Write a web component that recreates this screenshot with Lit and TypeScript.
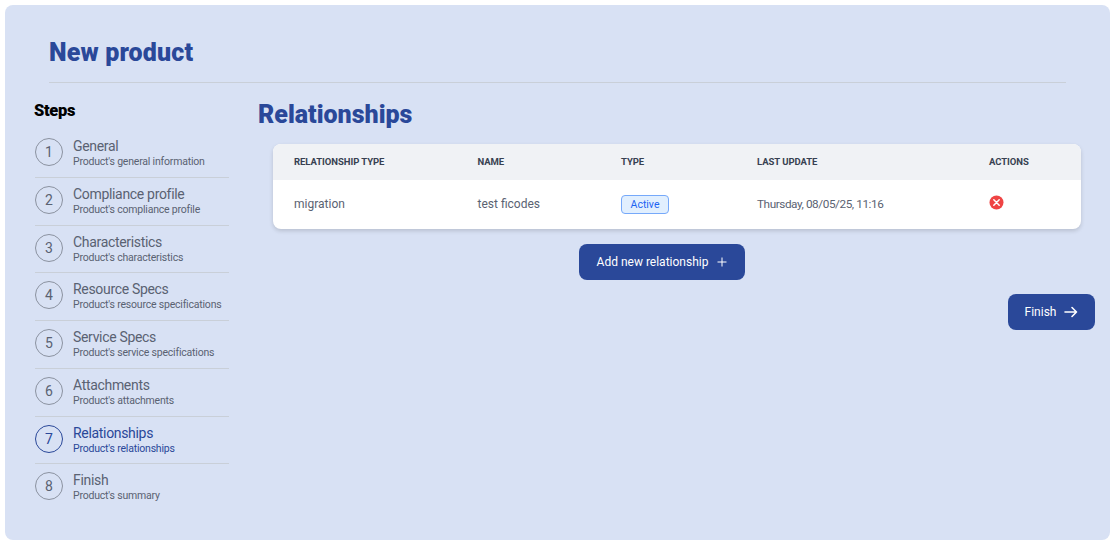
import { LitElement, html, css } from "lit";
import { customElement } from "lit/decorators.js";

const STEPS: [string, string][] = [
  ["General", "Product's general information"],
  ["Compliance profile", "Product's compliance profile"],
  ["Characteristics", "Product's characteristics"],
  ["Resource Specs", "Product's resource specifications"],
  ["Service Specs", "Product's service specifications"],
  ["Attachments", "Product's attachments"],
  ["Relationships", "Product's relationships"],
  ["Finish", "Product's summary"],
];

@customElement("app-root")
export class AppRoot extends LitElement {
  static styles = css`
    :host { display: block; width: 1120px; height: 549px; background: #fff; font-family: Roboto, "Noto Sans", sans-serif; overflow: hidden; }
    .page { box-sizing: border-box; margin: 5px 0 0 5px; width: 1105px; height: 535px; background: #d8e1f4; border-radius: 8px; padding: 34px 15px 0 30px; }
    .head { margin: 0 29px 0 14px; height: 43px; border-bottom: 1px solid #c9cfd8; }
    h1 { margin: 0; font-size: 25px; line-height: 28px; font-weight: 900; color: #2a4899; letter-spacing: 0.15px; }
    .body { display: flex; }
    .side { width: 194px; flex: none; padding-top: 18px; }
    .side h2 { margin: 0 0 9px -1px; font-size: 16.5px; line-height: 20px; font-weight: 900; color: #000; letter-spacing: -0.35px; }
    .step { box-sizing: border-box; height: 47.75px; display: flex; align-items: flex-start; gap: 10px; padding-top: 7px; border-bottom: 1px solid #c9cfd8; color: #5a6272; }
    .step:last-child { border-bottom: none; }
    .num { box-sizing: border-box; width: 28px; height: 28px; margin-top: 1px; flex: none; border: 1px solid #8b92a0; border-radius: 50%; display: flex; align-items: center; justify-content: center; font-size: 14px; }
    .txt { display: flex; flex-direction: column; margin-top: 1px; }
    .t { font-size: 14px; line-height: 17px; letter-spacing: -0.32px; }
    .s { font-size: 10.5px; line-height: 14px; letter-spacing: -0.2px; }
    .step.on { color: #2a4899; }
    .step.on .num { border-color: #2a4899; }
    .main { flex: 1; padding: 17px 0 0 29px; min-width: 0; }
    .main h2 { margin: 0; font-size: 25px; line-height: 30px; font-weight: 900; color: #2a4899; letter-spacing: 0; }
    .tbl { margin: 14px 14px 0 15px; background: #fff; border-radius: 8px; box-shadow: 0 2px 4px rgba(0,0,0,.15); overflow: hidden; }
    .row { display: grid; grid-template-columns: 183.5px 143.5px 136px 232px 1fr; padding-left: 21px; align-items: center; }
    .hd { height: 36px; padding-bottom: 2px; box-sizing: border-box; background: #f0f2f5; font-size: 9.5px; font-weight: 700; color: #374151; letter-spacing: -0.05px; }
    .bd { height: 49px; padding-bottom: 2px; box-sizing: border-box; font-size: 12px; color: #5a6272; }
    .date { font-size: 11.75px; letter-spacing: -0.42px; }
    .badge { display: inline-flex; align-items: center; justify-content: center; box-sizing: border-box; width: 48px; height: 19px; margin-top: 2px; border: 1px solid #76a9fa; background: #e1effe; border-radius: 4px; color: #1c64f2; font-size: 10.5px; }
    .x { display: block; margin: -2px 0 0 0; width: 15px; height: 15px; }
    .add { display: flex; justify-content: center; margin: 15px 29px 0 0; }
    .btn { display: inline-flex; align-items: center; justify-content: center; box-sizing: border-box; height: 36px; background: #2a4899; color: #fff; border-radius: 8px; font-size: 12px; font-weight: 400; }
    .b1 { width: 166px; gap: 9px; }
    .endr { display: flex; justify-content: flex-end; margin-top: 14px; }
    .b2 { width: 87px; gap: 8px; }
    svg { flex: none; }
  `;

  render() {
    return html`<div class="page">
      <div class="head"><h1>New product</h1></div>
      <div class="body">
        <aside class="side">
          <h2>Steps</h2>
          ${STEPS.map(([t, s], i) => html`<div class="step ${i === 6 ? "on" : ""}">
            <span class="num">${i + 1}</span>
            <span class="txt"><span class="t">${t}</span><span class="s">${s}</span></span>
          </div>`)}
        </aside>
        <main class="main">
          <h2>Relationships</h2>
          <div class="tbl">
            <div class="row hd"><span>RELATIONSHIP TYPE</span><span>NAME</span><span>TYPE</span><span>LAST UPDATE</span><span>ACTIONS</span></div>
            <div class="row bd"><span>migration</span><span>test ficodes</span><span><span class="badge">Active</span></span><span class="date">Thursday, 08/05/25, 11:16</span>
              <span><svg class="x" viewBox="0 0 15 15"><circle cx="7.5" cy="7.5" r="7" fill="#ef4444"/><path d="M4.8 4.8l5.4 5.4M10.2 4.8l-5.4 5.4" stroke="#fff" stroke-width="1.5" stroke-linecap="round"/></svg></span></div>
          </div>
          <div class="add"><span class="btn b1">Add new relationship
            <svg width="10" height="10" viewBox="0 0 10 10"><path d="M5 .5v9M.5 5h9" stroke="#fff" stroke-width="1"/></svg></span></div>
          <div class="endr"><span class="btn b2">Finish
            <svg width="14" height="12" viewBox="0 0 14 12"><path d="M1 6h11.5M8 1.5L12.5 6 8 10.5" fill="none" stroke="#fff" stroke-width="1.6" stroke-linecap="round" stroke-linejoin="round"/></svg></span></div>
        </main>
      </div>
    </div>`;
  }
}
